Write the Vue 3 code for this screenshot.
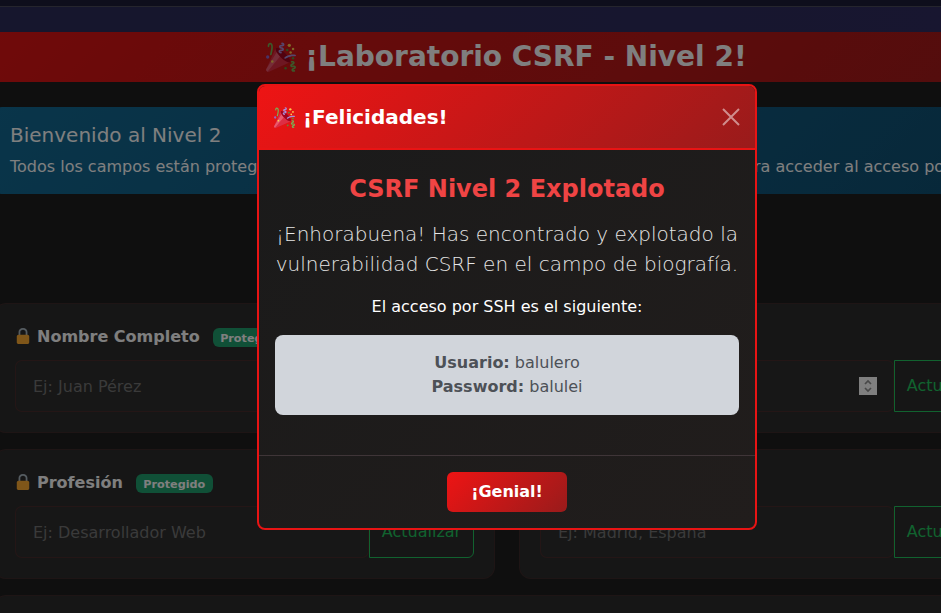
<script setup>
const rows = [
  [
    { label: 'Nombre Completo', placeholder: 'Ej: Juan Pérez', type: 'text' },
    { label: 'Edad', placeholder: '', type: 'number' },
  ],
  [
    { label: 'Profesión', placeholder: 'Ej: Desarrollador Web', type: 'text' },
    { label: 'Ubicación', placeholder: 'Ej: Madrid, España', type: 'text' },
  ],
]
</script>

<template>
  <div class="page">
    <svg width="0" height="0" class="defs" aria-hidden="true">
      <defs>
        <symbol id="popper" viewBox="0 0 36 36">
          <path fill="#DD2E44" d="M11.626 7.488c-.112.112-.197.247-.268.395l-.008-.008L.134 33.141l.011.011c-.208.403.14 1.223.853 1.937.713.713 1.533 1.061 1.936.853l.01.01L28.21 24.735l-.008-.009c.147-.07.282-.155.395-.269 1.562-1.562-.971-6.627-5.656-11.313-4.687-4.686-9.752-7.218-11.315-5.656z"/>
          <path fill="#EA596E" d="M13 12L.416 32.506l-.282.635.011.011c-.208.403.14 1.223.853 1.937.232.232.473.408.709.557L17 17l-4-5z"/>
          <path fill="#A0041E" d="M23.012 13.066c4.67 4.672 7.263 9.652 5.789 11.124-1.473 1.474-6.453-1.118-11.126-5.788-4.671-4.672-7.263-9.654-5.79-11.127 1.474-1.473 6.454 1.119 11.127 5.791z"/>
          <path fill="#AA8DD8" d="M18.59 13.609c-.199.161-.459.245-.734.215-.868-.094-1.598-.396-2.109-.873-.541-.505-.808-1.183-.735-1.862.128-1.192 1.324-2.286 3.363-2.066.793.085 1.147-.17 1.159-.292.014-.121-.277-.446-1.07-.532-.868-.094-1.598-.396-2.11-.873-.541-.505-.809-1.183-.735-1.862.13-1.192 1.325-2.286 3.362-2.065.578.062.883-.057 1.012-.134.103-.063.144-.123.148-.158.012-.121-.275-.446-1.07-.532-.549-.06-.947-.552-.886-1.102.059-.549.55-.946 1.101-.886 2.037.219 2.973 1.542 2.844 2.735-.13 1.194-1.325 2.286-3.364 2.067-.578-.063-.88.057-1.01.134-.103.062-.145.123-.149.157-.013.122.276.446 1.071.532 2.037.22 2.973 1.542 2.844 2.735-.129 1.192-1.324 2.286-3.362 2.065-.578-.062-.882.058-1.012.134-.104.064-.144.124-.148.158-.013.121.276.446 1.07.532.548.06.947.553.886 1.102-.028.274-.167.511-.366.671z"/>
          <path fill="#77B255" d="M30.661 22.857c1.973-.557 3.334.323 3.658 1.478.324 1.154-.378 2.615-2.35 3.17-.77.216-1.001.584-.97.701.034.118.425.312 1.193.095 1.972-.555 3.333.325 3.657 1.479.326 1.155-.378 2.614-2.351 3.17-.769.216-1.001.585-.967.702.033.117.423.311 1.192.095.53-.149 1.084.16 1.233.691.148.532-.161 1.084-.693 1.234-1.971.555-3.333-.323-3.659-1.479-.324-1.154.379-2.613 2.353-3.169.77-.217 1.001-.584.967-.702-.032-.117-.422-.312-1.19-.096-1.974.556-3.334-.322-3.659-1.479-.325-1.154.378-2.613 2.351-3.17.768-.215.999-.585.967-.701-.034-.118-.423-.312-1.192-.096-.532.15-1.083-.16-1.233-.691-.149-.532.161-1.083.693-1.232z"/>
          <path fill="#AA8DD8" d="M23.001 20.16c-.294 0-.584-.129-.782-.375-.345-.432-.274-1.061.156-1.406.218-.175 5.418-4.259 12.767-3.208.547.078.927.584.849 1.131-.078.546-.58.93-1.132.848-6.493-.922-11.187 2.754-11.233 2.791-.186.148-.406.219-.625.219z"/>
          <path fill="#77B255" d="M5.754 16c-.095 0-.192-.014-.288-.042-.529-.159-.829-.716-.67-1.245 1.133-3.773 2.16-9.794.898-11.364-.141-.178-.354-.353-.842-.316-.938.072-.849 2.051-.848 2.071.042.551-.372 1.031-.922 1.072-.559.034-1.031-.372-1.072-.923-.103-1.379.326-4.035 2.692-4.214 1.056-.08 1.933.287 2.552 1.057 2.371 2.951-.036 11.506-.542 13.192-.13.433-.528.712-.958.712z"/>
          <circle fill="#5C913B" cx="25.5" cy="9.5" r="1.5"/>
          <circle fill="#9266CC" cx="2" cy="18" r="2"/>
          <circle fill="#5C913B" cx="32.5" cy="19.5" r="1.5"/>
          <circle fill="#5C913B" cx="23.5" cy="31.5" r="1.5"/>
          <circle fill="#FFCC4D" cx="28" cy="4" r="2"/>
          <circle fill="#FFCC4D" cx="32.5" cy="8.5" r="1.5"/>
          <circle fill="#FFCC4D" cx="29.5" cy="12.5" r="1.5"/>
          <circle fill="#FFCC4D" cx="7.5" cy="23.5" r="1.5"/>
        </symbol>
        <symbol id="lock" viewBox="0 0 36 36">
          <path fill="#AAB8C2" d="M18 0C11.6 0 8 4 8 9v8h4V9c0-2.7 2.6-5 6-5s6 2.3 6 5v8h4V9c0-5-3.6-9-10-9z"/>
          <path fill="#FFAC33" d="M32 32c0 2.2-1.8 4-4 4H8c-2.2 0-4-1.8-4-4V19c0-2.2 1.8-4 4-4h20c2.2 0 4 1.8 4 4v13z"/>
        </symbol>
      </defs>
    </svg>

    <nav class="topbar"><div class="topbar-strip"></div></nav>
    <header class="hero">
      <h1><svg class="hero-icon"><use href="#popper" /></svg>¡Laboratorio CSRF - Nivel 2!</h1>
    </header>
    <main class="content">
      <section class="alert">
        <h4>Bienvenido al Nivel 2</h4>
        <p>Todos los campos están protegidos excepto uno. Tu tarea: encuentra el campo vulnerable para acceder al acceso por SSH</p>
      </section>
      <div v-for="(row, r) in rows" :key="r" class="form-row">
        <div v-for="field in row" :key="field.label" class="card">
          <div class="label-line">
            <svg class="lock"><use href="#lock" /></svg>
            <span class="label">{{ field.label }}</span>
            <span class="badge">Protegido</span>
          </div>
          <div class="input-group">
            <input class="input" :type="field.type" :placeholder="field.placeholder" />
            <span v-if="field.type === 'number'" class="spinner">
              <svg width="18" height="18" viewBox="0 0 18 18">
                <path d="M6 7 L9 4 L12 7 M6 11 L9 14 L12 11" fill="none" stroke="#909090" stroke-width="1.7" />
              </svg>
            </span>
            <button class="update" type="button">Actualizar</button>
          </div>
        </div>
      </div>
      <div class="card card-wide"></div>
    </main>

    <div class="backdrop">
      <div class="modal">
        <div class="modal-header">
          <span class="modal-title"><svg class="title-icon"><use href="#popper" /></svg>¡Felicidades!</span>
          <svg class="close" viewBox="0 0 18 18" width="18" height="18" aria-label="Cerrar">
            <path d="M1 1 L17 17 M17 1 L1 17" stroke="#fff" stroke-width="2" fill="none" />
          </svg>
        </div>
        <div class="modal-body">
          <h3>CSRF Nivel 2 Explotado</h3>
          <p class="lead">¡Enhorabuena! Has encontrado y explotado la vulnerabilidad CSRF en el campo de biografía.</p>
          <p class="sub">El acceso por SSH es el siguiente:</p>
          <div class="creds">
            <div><strong>Usuario:</strong> balulero</div>
            <div><strong>Password:</strong> balulei</div>
          </div>
        </div>
        <div class="modal-footer">
          <button class="genial" type="button">¡Genial!</button>
        </div>
      </div>
    </div>
  </div>
</template>

<style>
html, body { margin: 0; background: #1e1e1e; overflow: hidden; }
</style>

<style scoped>
.defs { position: absolute; }
.page {
  position: relative;
  width: 941px;
  height: 613px;
  overflow: hidden;
  background: #1e1e1e;
  font-family: "DejaVu Sans", sans-serif;
  font-size: 16px;
  line-height: 24px;
  color: #fff;
}
.topbar {
  height: 32px;
  background: linear-gradient(90deg, #2c2c5a, #302c60);
}
.topbar-strip {
  height: 6px;
  background: #1c1c38;
  border-bottom: 1px solid #4a4a5a;
}
.hero {
  height: 50px;
  display: flex;
  align-items: center;
  justify-content: center;
  padding-left: 72px;
  background: linear-gradient(135deg, #e01414, #a81a1a);
}
.hero h1 {
  display: flex;
  align-items: center;
  margin: 0;
  font-size: 28px;
  font-weight: 700;
  line-height: 34px;
  white-space: nowrap;
}
.hero-icon {
  width: 30px;
  height: 30px;
  margin-right: 9px;
}
.content {
  width: 1026px;
  margin-left: -6px;
  padding-top: 25px;
}
.alert {
  height: 87px;
  box-sizing: border-box;
  padding: 16px;
  margin-bottom: 109px;
  border-radius: 8px;
  background: linear-gradient(135deg, #136a94, #0f4f72);
  color: #fff;
  white-space: nowrap;
}
.alert h4 {
  margin: 0 0 8px;
  font-size: 20px;
  font-weight: 400;
  line-height: 24px;
}
.alert p {
  margin: 0;
  font-size: 16px;
  line-height: 24px;
}
.form-row {
  display: grid;
  grid-template-columns: 501px 501px;
  column-gap: 24px;
  margin-bottom: 16px;
}
.card {
  box-sizing: border-box;
  height: 130px;
  padding: 20px;
  border: 1px solid rgba(220, 38, 38, 0.1);
  border-radius: 12px;
  background: #2c2c2c;
}
.card-wide {
  width: 1026px;
}
.label-line {
  display: flex;
  align-items: center;
  height: 24px;
  margin-bottom: 12px;
}
.lock {
  width: 16px;
  height: 16px;
  margin-right: 6px;
}
.label {
  font-size: 16px;
  font-weight: 700;
  position: relative;
  top: 1px;
}
.badge {
  margin-left: 13px;
  padding: 0 7.5px;
  border-radius: 6px;
  height: 19px;
  line-height: 22px;
  font-size: 11.2px;
  font-weight: 700;
  background: #20a06e;
  color: #fff;
  position: relative;
  top: 1px;
}
.input-group {
  position: relative;
  display: flex;
  height: 52px;
}
.input {
  flex: 1;
  min-width: 0;
  box-sizing: border-box;
  height: 52px;
  padding: 0 17px;
  border: 1px solid rgba(220, 38, 38, 0.16);
  border-radius: 7px;
  background: #2e2e2e;
  color: #fff;
  font: inherit;
  outline: none;
}
.input::placeholder {
  color: #757575;
  opacity: 1;
}
.input::-webkit-inner-spin-button {
  -webkit-appearance: none;
}
.spinner {
  position: absolute;
  right: 122px;
  top: 17px;
  width: 18px;
  height: 18px;
  background: #ffffff;
}
.spinner svg { display: block; }
.update {
  width: 105px;
  box-sizing: border-box;
  border: 1px solid #22c55e;
  border-radius: 0 6px 6px 0;
  background: transparent;
  color: #22c55e;
  font: inherit;
  padding: 0;
}
.backdrop {
  position: absolute;
  inset: 0;
  background: rgba(0, 0, 0, 0.5);
  padding: 84px 0 0 257px;
  box-sizing: border-box;
}
.modal {
  width: 500px;
  box-sizing: border-box;
  border: 2px solid #e81414;
  border-radius: 8px;
  background: linear-gradient(135deg, #1a1a1a, #211d1c);
  overflow: hidden;
}
.modal-header {
  display: flex;
  align-items: center;
  justify-content: space-between;
  padding: 16px 15px 16px 15px;
  height: 64px;
  box-sizing: border-box;
  background: linear-gradient(135deg, #ee1414, #991b1b);
  border-bottom: 2px solid #e81414;
}
.modal-title {
  display: flex;
  align-items: center;
  font-size: 20px;
  font-weight: 700;
  line-height: 30px;
}
.title-icon {
  width: 21px;
  height: 21px;
  margin-right: 8px;
}
.close {
  opacity: 0.5;
}
.modal-body {
  padding: 25px 16px 24px;
  text-align: center;
}
.modal-body h3 {
  margin: 0 0 15px;
  font-size: 24px;
  font-weight: 700;
  line-height: 29px;
  color: #ef4444;
}
.lead {
  margin: 0 0 16px;
  font-size: 20px;
  font-weight: 300;
  line-height: 30px;
  color: #e6e6e6;
}
.sub {
  margin: 0 0 16px;
}
.creds {
  margin-bottom: 16px;
  padding: 16px;
  border-radius: 8px;
  background: #d1d5db;
  color: #4d5157;
}
.modal-footer {
  display: flex;
  justify-content: center;
  padding: 16px;
  border-top: 1px solid #3f3538;
}
.genial {
  width: 120px;
  height: 40px;
  border: 0;
  border-radius: 6px;
  background: linear-gradient(135deg, #ee1414, #991b1b);
  color: #fff;
  font: inherit;
  font-weight: 700;
}
</style>
